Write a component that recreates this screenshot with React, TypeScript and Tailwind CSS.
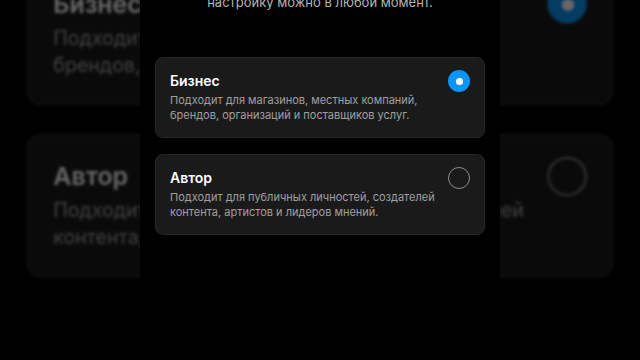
import React from 'react';

type Option = {
  id: string;
  title: string;
  lines: string[];
};

const options: Option[] = [
  {
    id: 'business',
    title: 'Бизнес',
    lines: ['Подходит для магазинов, местных компаний,', 'брендов, организаций и поставщиков услуг.']
  },
  {
    id: 'creator',
    title: 'Автор',
    lines: ['Подходит для публичных личностей, создателей', 'контента, артистов и лидеров мнений.']
  }
];

const Radio = ({ checked }: { checked: boolean }) =>
  checked ? (
    <div className="w-[22px] h-[22px] shrink-0 rounded-full bg-[#0a95f8] flex items-center justify-center">
      <div className="w-[7px] h-[7px] rounded-full bg-white" />
    </div>
  ) : (
    <div className="w-[22px] h-[22px] shrink-0 rounded-full border-[1.5px] border-[#8c8c8c]" />
  );

// one screen of the app, 360 x 360
const Screen = ({ selected }: { selected: string }) => (
  <div className="w-[360px] h-[360px] bg-black flex flex-col overflow-hidden">
    <p className="mt-[-6px] h-[16px] text-center text-[13px] leading-[16px] text-[#b4b4b4]">
      настройку можно в любой момент.
    </p>

    <div className="mt-[47px] px-[15px] flex flex-col gap-[16px]">
      {options.map((opt) => (
        <div
          key={opt.id}
          className="h-[81px] rounded-[8px] bg-[#1a1a1b] border border-[#262628] pl-[14px] pr-[14px] pt-[12px]"
        >
          <div className="flex items-center justify-between">
            <h3 className="text-[14px] leading-[20px] font-semibold text-white">{opt.title}</h3>
            <Radio checked={selected === opt.id} />
          </div>
          <p className="mt-[1px] text-[11px] leading-[15px] text-[#a0a0a0] whitespace-nowrap">
            {opt.lines[0]}
            <br />
            {opt.lines[1]}
          </p>
        </div>
      ))}
    </div>
  </div>
);

export default function App() {
  return (
    <div
      className="relative w-[640px] h-[360px] bg-black overflow-hidden"
      style={{ fontFamily: 'Inter, "Noto Sans", sans-serif' }}
    >
      {/* blurred, zoomed copy of the frame behind the vertical video */}
      <div className="absolute inset-0 flex items-center justify-center">
        <div className="scale-[1.7778] brightness-[0.4] blur-[1px]">
          <Screen selected="business" />
        </div>
      </div>

      <div className="relative h-full flex justify-center">
        <Screen selected="business" />
      </div>
    </div>
  );
}
